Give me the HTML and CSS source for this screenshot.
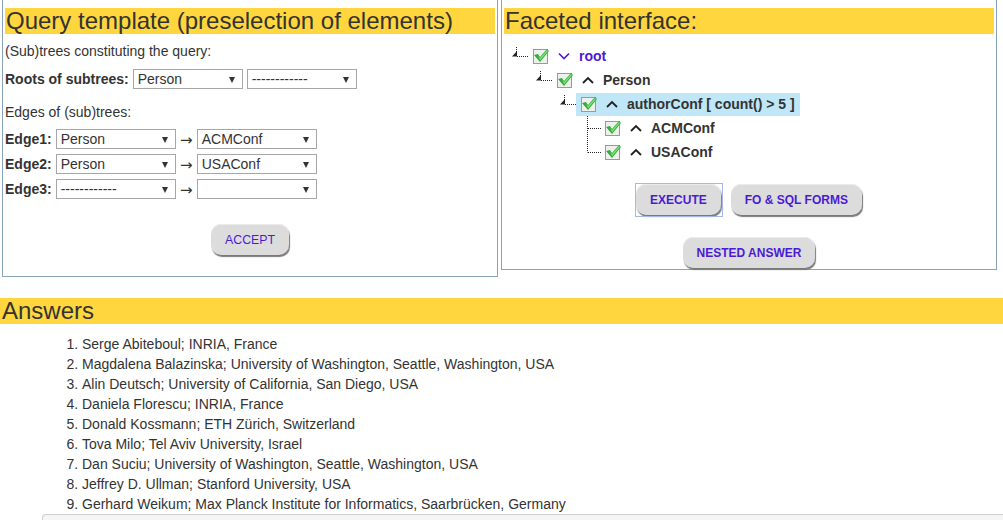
FILE: index.html
```html
<!DOCTYPE html>
<html>
<head>
<meta charset="utf-8">
<link rel="stylesheet" href="styles.css">
</head>
<body>
<div class="top">
  <section class="panel query">
    <h2 class="band">Query template (preselection of elements)</h2>
    <p class="intro">(Sub)trees constituting the query:</p>
    <div class="roots">
      <b>Roots of subtrees:</b>
      <span class="sel w110">Person</span>
      <span class="sel w110">------------</span>
    </div>
    <p class="edges-title">Edges of (sub)trees:</p>
    <div class="edges">
      <div class="edge"><b>Edge1:</b><span class="sel w120">Person</span><span class="arrow">→</span><span class="sel w120">ACMConf</span></div>
      <div class="edge"><b>Edge2:</b><span class="sel w120">Person</span><span class="arrow">→</span><span class="sel w120">USAConf</span></div>
      <div class="edge"><b>Edge3:</b><span class="sel w120">------------</span><span class="arrow">→</span><span class="sel w120"></span></div>
    </div>
    <div class="actions"><button class="btn plain">ACCEPT</button></div>
  </section>

  <section class="panel facets">
    <h2 class="band">Faceted interface:</h2>
    <div class="tree">
      <div class="node l0">
        <svg class="conn" width="16" height="24" viewBox="0 0 16 24"><line x1="4.5" y1="3" x2="4.5" y2="12" stroke="#222" stroke-dasharray="1 1"/><polygon points="0,12.5 5,12.5 5,7" fill="#222"/><line x1="5" y1="12.5" x2="16" y2="12.5" stroke="#222" stroke-dasharray="1 1"/></svg>
        <span class="item">
          <svg class="cb" width="16" height="16" viewBox="0 0 16 16"><rect x="0.5" y="1.5" width="14" height="14" fill="#eef0ee" stroke="#9a9a9a"/><polygon points="1,7 5,6 7,9 14,1 16,3 7,14" fill="#2fae35"/><polygon points="5,6.8 7,10 14,2 15,3 7,12.5" fill="#7fdc7f"/></svg>
          <svg class="chev down" width="12" height="8" viewBox="0 0 12 8"><polyline points="1,1.5 6,6.5 11,1.5" fill="none" stroke="#4c1ad6" stroke-width="1.6"/></svg>
          <span class="label root">root</span>
        </span>
      </div>
      <div class="node l1">
        <svg class="conn" width="16" height="24" viewBox="0 0 16 24"><line x1="4.5" y1="3" x2="4.5" y2="12" stroke="#222" stroke-dasharray="1 1"/><polygon points="0,12.5 5,12.5 5,7" fill="#222"/><line x1="5" y1="12.5" x2="16" y2="12.5" stroke="#222" stroke-dasharray="1 1"/></svg>
        <span class="item">
          <svg class="cb" width="16" height="16" viewBox="0 0 16 16"><rect x="0.5" y="1.5" width="14" height="14" fill="#eef0ee" stroke="#9a9a9a"/><polygon points="1,7 5,6 7,9 14,1 16,3 7,14" fill="#2fae35"/><polygon points="5,6.8 7,10 14,2 15,3 7,12.5" fill="#7fdc7f"/></svg>
          <svg class="chev" width="12" height="8" viewBox="0 0 12 8"><polyline points="1,7 6,2 11,7" fill="none" stroke="#222" stroke-width="1.8"/></svg>
          <span class="label">Person</span>
        </span>
      </div>
      <div class="node l2">
        <svg class="conn" width="16" height="24" viewBox="0 0 16 24"><line x1="4.5" y1="3" x2="4.5" y2="12" stroke="#222" stroke-dasharray="1 1"/><polygon points="0,12.5 5,12.5 5,7" fill="#222"/><line x1="5" y1="12.5" x2="16" y2="12.5" stroke="#222" stroke-dasharray="1 1"/></svg>
        <span class="item selected">
          <svg class="cb" width="16" height="16" viewBox="0 0 16 16"><rect x="0.5" y="1.5" width="14" height="14" fill="#eef0ee" stroke="#9a9a9a"/><polygon points="1,7 5,6 7,9 14,1 16,3 7,14" fill="#2fae35"/><polygon points="5,6.8 7,10 14,2 15,3 7,12.5" fill="#7fdc7f"/></svg>
          <svg class="chev" width="12" height="8" viewBox="0 0 12 8"><polyline points="1,7 6,2 11,7" fill="none" stroke="#222" stroke-width="1.8"/></svg>
          <span class="label">authorConf [ count() &gt; 5 ]</span>
        </span>
      </div>
      <div class="node l3">
        <svg class="conn" width="16" height="24" viewBox="0 0 16 24"><line x1="3.5" y1="0" x2="3.5" y2="24" stroke="#222" stroke-dasharray="1 1"/><line x1="4" y1="12.5" x2="18" y2="12.5" stroke="#222" stroke-dasharray="1 1"/></svg>
        <span class="item">
          <svg class="cb" width="16" height="16" viewBox="0 0 16 16"><rect x="0.5" y="1.5" width="14" height="14" fill="#eef0ee" stroke="#9a9a9a"/><polygon points="1,7 5,6 7,9 14,1 16,3 7,14" fill="#2fae35"/><polygon points="5,6.8 7,10 14,2 15,3 7,12.5" fill="#7fdc7f"/></svg>
          <svg class="chev" width="12" height="8" viewBox="0 0 12 8"><polyline points="1,7 6,2 11,7" fill="none" stroke="#222" stroke-width="1.8"/></svg>
          <span class="label">ACMConf</span>
        </span>
      </div>
      <div class="node l3">
        <svg class="conn" width="16" height="24" viewBox="0 0 16 24"><line x1="3.5" y1="0" x2="3.5" y2="12.5" stroke="#222" stroke-dasharray="1 1"/><line x1="4" y1="12.5" x2="18" y2="12.5" stroke="#222" stroke-dasharray="1 1"/></svg>
        <span class="item">
          <svg class="cb" width="16" height="16" viewBox="0 0 16 16"><rect x="0.5" y="1.5" width="14" height="14" fill="#eef0ee" stroke="#9a9a9a"/><polygon points="1,7 5,6 7,9 14,1 16,3 7,14" fill="#2fae35"/><polygon points="5,6.8 7,10 14,2 15,3 7,12.5" fill="#7fdc7f"/></svg>
          <svg class="chev" width="12" height="8" viewBox="0 0 12 8"><polyline points="1,7 6,2 11,7" fill="none" stroke="#222" stroke-width="1.8"/></svg>
          <span class="label">USAConf</span>
        </span>
      </div>
    </div>
    <div class="btn-row first">
      <button class="btn focused">EXECUTE</button>
      <button class="btn">FO &amp; SQL FORMS</button>
    </div>
    <div class="btn-row second">
      <button class="btn">NESTED ANSWER</button>
    </div>
  </section>
</div>

<section class="answers">
  <h2 class="band wide">Answers</h2>
  <div class="result">
    <ol class="list">
      <li>Serge Abiteboul; INRIA, France</li>
      <li>Magdalena Balazinska; University of Washington, Seattle, Washington, USA</li>
      <li>Alin Deutsch; University of California, San Diego, USA</li>
      <li>Daniela Florescu; INRIA, France</li>
      <li>Donald Kossmann; ETH Zürich, Switzerland</li>
      <li>Tova Milo; Tel Aviv University, Israel</li>
      <li>Dan Suciu; University of Washington, Seattle, Washington, USA</li>
      <li>Jeffrey D. Ullman; Stanford University, USA</li>
      <li>Gerhard Weikum; Max Planck Institute for Informatics, Saarbrücken, Germany</li>
    </ol>
    <div class="well"></div>
  </div>
</section>
</body>
</html>
```

FILE: styles.css
```css
* { box-sizing: border-box; }

html, body {
  margin: 0;
  padding: 0;
  background: #fff;
  overflow: hidden;
}

body {
  font-family: "Liberation Sans", Arial, sans-serif;
  font-size: 14px;
  line-height: 20px;
  color: #333;
}

.top {
  display: flex;
  align-items: flex-start;
  gap: 3px;
  margin-top: -1px;
  padding-left: 2px;
}

.panel {
  width: 496px;
  border: 1px solid #88a4bd;
  padding: 8px 2px 0 2px;
}

.query { padding-bottom: 21px; }
.facets { padding-bottom: 1px; }

.band {
  margin: 0;
  background: #ffd63d;
  color: #333;
  font-weight: normal;
  font-size: 24px;
  line-height: 26px;
  height: 26px;
  padding-left: 1px;
  white-space: nowrap;
}

.intro {
  margin: 7px 0 0 0;
}

.roots {
  margin-top: 8px;
  display: flex;
  align-items: center;
  gap: 4px;
  height: 20px;
}

.edges-title {
  margin: 13px 0 0 0;
}

.edges {
  margin-top: 7px;
  display: flex;
  flex-direction: column;
  gap: 5px;
}

.edge {
  display: flex;
  align-items: center;
  gap: 4px;
  height: 20px;
}

.sel {
  position: relative;
  display: inline-block;
  height: 20px;
  line-height: 18px;
  border: 1px solid #a7a7a7;
  background: #fff;
  padding-left: 4px;
  color: #333;
  white-space: nowrap;
}

.sel::after {
  content: "";
  position: absolute;
  right: 7px;
  top: 7px;
  border-left: 3.5px solid transparent;
  border-right: 3.5px solid transparent;
  border-top: 6px solid #333;
}

.w110 { width: 110px; }
.w120 { width: 120px; }

.arrow {
  display: inline-block;
  width: 13px;
  text-align: center;
  color: #333;
  font-family: "DejaVu Sans", sans-serif;
  font-size: 15px;
  line-height: 20px;
  padding-top: 1px;
  white-space: nowrap;
}

.actions {
  margin-top: 25px;
  display: flex;
  justify-content: center;
}

.btn {
  position: relative;
  height: 31px;
  padding: 0 14px;
  border: none;
  border-radius: 10px;
  background: #dcdcdc;
  box-shadow: 1px 2px 1px #7a7a7a, inset 0 1px 0 #ececec;
  font-family: "Liberation Sans", Arial, sans-serif;
  font-size: 12px;
  font-weight: bold;
  color: #4c1ad6;
  cursor: pointer;
}

.btn.plain { font-weight: normal; font-size: 12.3px; }

.btn.focused::after {
  content: "";
  position: absolute;
  left: -1px;
  top: -1px;
  right: -2px;
  bottom: -2px;
  border: 1.5px solid #a8b6ee;
}

/* tree */
.tree {
  margin-top: 10px;
  padding-left: 8px;
}

.node {
  display: flex;
  align-items: center;
  height: 24px;
}

.l1 { margin-left: 24px; }
.l2 { margin-left: 48px; }
.l3 { margin-left: 72px; }

.conn {
  flex: none;
  overflow: visible;
}

.item {
  display: flex;
  align-items: center;
  height: 23px;
  padding: 0 5px;
}

.item.selected {
  background: #bfe7f8;
}

.cb { flex: none; }

.chev {
  flex: none;
  margin-left: 9px;
  margin-right: 9px;
}

.label {
  font-weight: bold;
  font-size: 14px;
  color: #333;
  white-space: nowrap;
}

.label.root { color: #4c1ad6; }

.btn-row {
  display: flex;
  justify-content: center;
  gap: 10px;
}

.btn-row.first { margin-top: 20px; }
.btn-row.second { margin-top: 22px; }

/* answers */
.answers {
  margin-top: 21px;
}

.band.wide {
  padding-left: 2px;
}

.result {
  padding-left: 42px;
}

.list {
  margin: 10px 0 0 0;
  padding-left: 40px;
}

.list li {
  line-height: 20px;
}

.well {
  height: 30px;
  border: 1px solid #cfcfcf;
  border-radius: 4px 0 0 0;
  background: #f5f5f5;
  border-right: none;
}
```
